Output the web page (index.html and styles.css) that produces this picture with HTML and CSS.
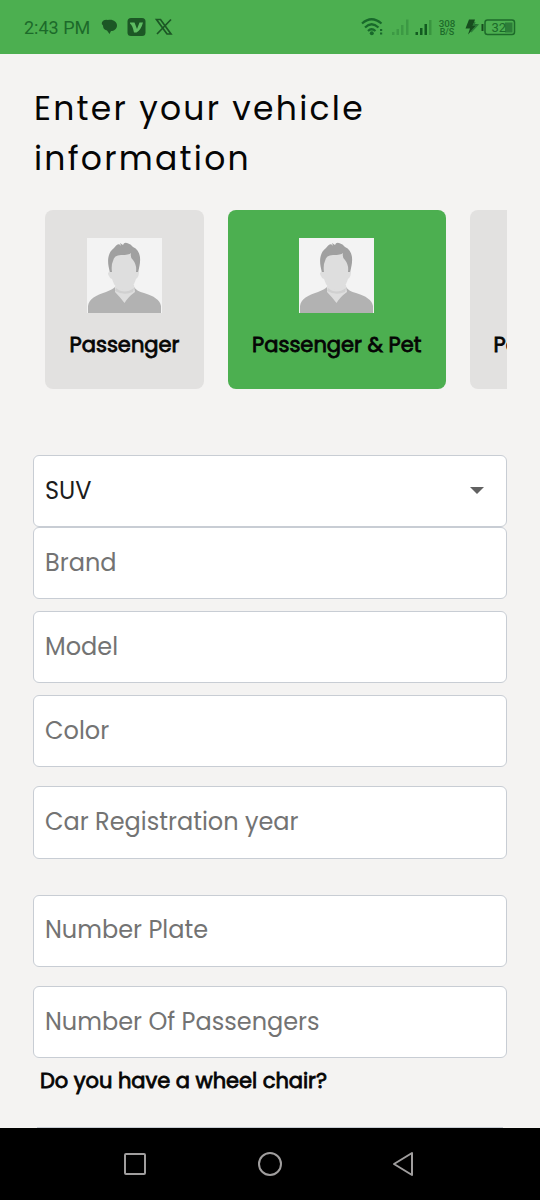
FILE: index.html
```html
<!DOCTYPE html>
<html lang="en">
<head>
<meta charset="utf-8">
<title>Vehicle information</title>
<link rel="stylesheet" href="styles.css">
</head>
<body>
<svg class="defs" width="0" height="0" aria-hidden="true">
  <symbol id="avatar" viewBox="0 0 75 75">
    <rect width="75" height="75" fill="#f3f3f3"/>
    <path d="M1 75V68C2 61 9 57 19 54C24 52 27 50 28 49L47 49C49 52 52 54 57 55C67 58 73 62 74 68V75Z" fill="#b2b2b2"/>
    <path d="M28 48V54Q33 59 37.500 65Q41 59 48 54L47 47Z" fill="#dedede"/>
    <path d="M29 50Q37 57 47 50L46 54Q37 58 28 53Z" fill="#d0d0d0"/>
    <path d="M22 34Q20 35 22 38Q23 41 25 41Q28 52 37 52Q46 52 49 41Q52 39 52 34L49 16Q37 8 25 18Z" fill="#dedede"/>
    <path d="M23 34C20 25 20 15 27 10C30 6 32 5 34 8L33 5L36 7Q37 4 40 5Q44 6 46 9C55 13 54 24 51 34H49Q50 27 46 22Q43 20 44 15Q42 17 34 17Q27 17 26 23Q24 27 25 34Z" fill="#a0a0a0"/>
  </symbol>
</svg>
<div class="screen">
  <header class="status">
    <span class="time">2:43 PM</span>
    <svg class="notices" width="74" height="22" viewBox="0 0 74 22">
      <path d="M7 4C12 3 16 6 16 9.500C16 13 13 15 10 15L8.500 18L6 14.500C3 14 2 12 2 9.500Q0 8 1 6Q3 3 7 4Z" fill="#1c5725"/>
      <rect x="26.500" y="2" width="18" height="18" rx="3.500" fill="#1c5725"/>
      <path d="M29 6.500H33.500L36 13L38.500 6.500H42Q40 14 35.500 16.500H33Q31.500 9 29 7.500Z" fill="#5fbd63"/>
      <path d="M55.500 3.500H59.500L70 18H66ZM70 3.500L56 18" fill="none" stroke="#1c5725" stroke-width="1.700"/>
    </svg>
    <svg class="signals" width="72" height="22" viewBox="0 0 72 22">
      <g fill="none" stroke="#18692b" stroke-width="2.200">
        <path d="M1 7.500Q10.500 -1 20.500 7.500M4 11.500Q10.500 5 17.500 11.500M7 15Q10.500 11.500 14.500 15"/>
      </g>
      <circle cx="10.800" cy="17.300" r="2" fill="#18692b"/>
      <path d="M19 13h2.200v2h-2.200zM19 16.500h2.200v2h-2.200z" fill="#18692b"/>
      <path d="M31 16h2.500v3h-2.500zM35.500 13h2.500v6h-2.500zM40 9h2.500v10h-2.500zM45 3.500h2.500v15.500h-2.500z" fill="#3c9944"/>
      <path d="M54.500 16h2.500v3h-2.500zM59 12h2.500v7h-2.500zM63.500 8h2.500v11h-2.500z" fill="#125b20"/>
      <path d="M68 4h2.500v15h-2.500z" fill="#39943f"/>
    </svg>
    <span class="rate"><span>308</span><span>B/S</span></span>
    <svg class="battery" width="52" height="22" viewBox="0 0 52 22">
      <path d="M4 3.500H10L8.500 8H13L3 18.500L5 12.500H0.500Z" fill="#174d1e"/>
      <path d="M10 6L8.500 9H12.500L6 16" fill="none" stroke="#2c7d38" stroke-width="1.500"/>
      <path d="M17.500 8v7" stroke="#174d1e" stroke-width="2"/>
      <rect x="20" y="4" width="29.500" height="14.500" rx="2.500" fill="none" stroke="#1d6a2a" stroke-width="1.500"/>
      <rect x="40" y="6.500" width="7.500" height="10" fill="#2c7d38"/>
      <text class="battery-level" x="26.500" y="16">32</text>
    </svg>
  </header>

  <main class="content">
    <h1 class="title"><span class="title-line">Enter your vehicle</span><span class="title-line">information</span></h1>

    <section class="cards">
      <article class="card card-passenger">
        <svg class="avatar"><use href="#avatar"/></svg>
        <span class="card-label">Passenger</span>
      </article>
      <article class="card card-pet selected">
        <svg class="avatar"><use href="#avatar"/></svg>
        <span class="card-label">Passenger &amp; Pet</span>
      </article>
      <article class="card card-next">
        <span class="card-label">Pe</span>
      </article>
    </section>

    <form class="form">
      <div class="field select"><span>SUV</span><i class="caret"></i></div>
      <div class="field brand"><span>Brand</span></div>
      <div class="field model"><span>Model</span></div>
      <div class="field color"><span>Color</span></div>
      <div class="field year"><span>Car Registration year</span></div>
      <div class="field plate"><span>Number Plate</span></div>
      <div class="field count"><span>Number Of Passengers</span></div>
      <p class="question">Do you have a wheel chair?</p>
      <div class="next-field"></div>
    </form>
  </main>

  <nav class="nav">
    <svg width="28" height="28" viewBox="0 0 28 28"><rect x="4" y="4" width="20" height="20" rx="1"/></svg>
    <svg width="28" height="28" viewBox="0 0 28 28"><circle cx="14" cy="14" r="11"/></svg>
    <svg width="28" height="28" viewBox="0 0 28 28"><path d="M21 3V25L3 14Z"/></svg>
  </nav>
</div>
</body>
</html>
```
FILE: styles.css
```css
* { box-sizing: border-box; }
body { margin: 0; background: #f4f3f2; font-family: Poppins, Inter, sans-serif; }
.defs { display: block; }
.screen { width: 540px; height: 1200px; display: flex; flex-direction: column; overflow: hidden; }
.status { height: 54px; flex: none; background: #4caf50; display: flex; align-items: center; padding-left: 24px; color: #1c6a2a; }
.time { width: 77px; font: 18px/22px Roboto, sans-serif; white-space: nowrap; padding-top: 1px; }
.notices { margin-right: 186px; flex: none; }
.signals { flex: none; }
.rate { width: 18px; margin-left: 5px; display: flex; flex-direction: column; align-items: center; font: 500 9.800px/9px Roboto, sans-serif; padding-top: 2px; }
.rate span:last-child { font-size: 9px; }
.battery { margin-left: 9px; flex: none; }
.battery-level { font: 13px Roboto, sans-serif; fill: #1c6a2a; }

.content { flex: 1; min-height: 0; padding: 30px 33px 0; }
.title { margin: 0; padding-left: 1px; font-size: 33px; line-height: 50px; font-weight: 400; color: #050505; letter-spacing: 2.250px; }
.title-line { display: block; white-space: nowrap; }

.cards { margin-top: 26px; height: 179px; padding-left: 12px; display: flex; gap: 24px; overflow: hidden; }
.card { flex: none; height: 179px; padding-top: 28px; border-radius: 8px; background: #e2e1e0; display: flex; flex-direction: column; align-items: center; }
.card-passenger { width: 159px; }
.card-pet { width: 217.500px; }
.selected { background: #4caf50; }
.card-next { width: 100px; padding: 120px 0 0 24px; align-items: flex-start; }
.avatar { width: 75px; height: 75px; flex: none; }
.avatar + .card-label { margin-top: 17px; }
.card-label,
.question { font-size: 21px; line-height: 30px; font-weight: 400; color: #050505; -webkit-text-stroke: 0.8px #050505; white-space: nowrap; }

.form { margin-top: 66px; }
.field { height: 72px; padding: 0 22px 2px 11px; border: 1px solid #c8cdd4; border-radius: 6px; background: #fff; display: flex; align-items: center; font-size: 24px; color: #737373; white-space: nowrap; }
.select { color: #1c1c1c; justify-content: space-between; }
.caret { border: 7px solid transparent; border-top-color: #616161; border-bottom: 0; }
.model, .color { margin-top: 12px; }
.year { margin-top: 19px; height: 73px; padding-bottom: 3px; }
.plate { margin-top: 36px; padding-bottom: 3px; }
.count { margin-top: 19px; }
.question { margin: 8px 0 0 7px; letter-spacing: -0.040px; }
.next-field { margin: 31px 4px 0; height: 1px; background: #c8cdd4; }

.nav { height: 72px; flex: none; background: #000; padding: 0 121px; display: flex; align-items: center; justify-content: space-between; }
.nav svg { fill: none; stroke: #a09e9e; stroke-width: 2; stroke-linejoin: round; }
```
